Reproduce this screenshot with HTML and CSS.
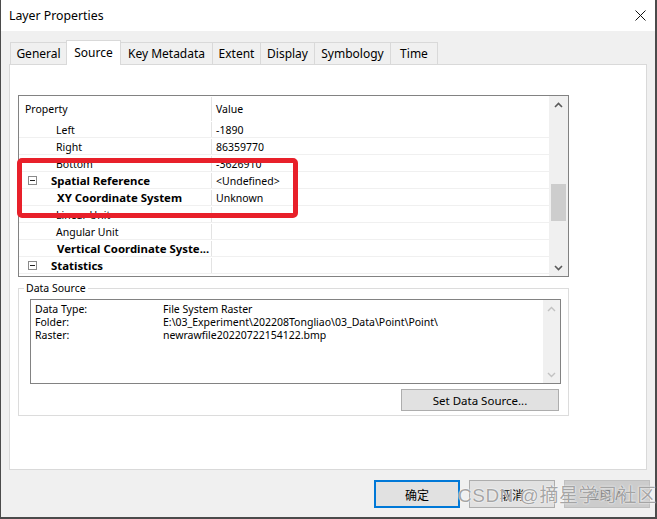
FILE: index.html
```html
<!DOCTYPE html>
<html>
<head>
<meta charset="utf-8">
<title>Layer Properties</title>
<link rel="stylesheet" href="styles.css">
</head>
<body>
<div class="window">
  <div class="titlebar">
    <span class="title">Layer Properties</span>
    <svg class="close" width="11" height="11" viewBox="0 0 11 11"><path d="M0.5 0.5L10.5 10.5M10.5 0.5L0.5 10.5" stroke="#111" stroke-width="1" fill="none"/></svg>
  </div>
  <div class="client">
    <div class="tabs">
      <div class="tab t-general">General</div>
      <div class="tab active t-source">Source</div>
      <div class="tab t-key">Key Metadata</div>
      <div class="tab t-extent">Extent</div>
      <div class="tab t-display">Display</div>
      <div class="tab t-symb">Symbology</div>
      <div class="tab t-time">Time</div>
    </div>
    <div class="panel">
      <div class="grid">
        <div class="grid-main">
          <div class="grid-head"><div class="c1 hcell">Property</div><div class="c2 hcell">Value</div></div>
          <div class="grow"><div class="c1 sub">Left</div><div class="c2">-1890</div></div>
          <div class="grow"><div class="c1 sub">Right</div><div class="c2">86359770</div></div>
          <div class="grow"><div class="c1 sub">Bottom</div><div class="c2">-3626910</div></div>
          <div class="grow"><div class="c1 grp"><span class="minus"></span><b>Spatial Reference</b></div><div class="c2">&lt;Undefined&gt;</div></div>
          <div class="grow"><div class="c1 subb"><b>XY Coordinate System</b></div><div class="c2">Unknown</div></div>
          <div class="grow"><div class="c1 sub">Linear Unit</div><div class="c2"></div></div>
          <div class="grow"><div class="c1 sub">Angular Unit</div><div class="c2"></div></div>
          <div class="grow"><div class="c1 subb"><b>Vertical Coordinate Syste...</b></div><div class="c2"></div></div>
          <div class="grow"><div class="c1 grp"><span class="minus"></span><b>Statistics</b></div><div class="c2"></div></div>
        </div>
        <div class="vscroll">
          <div class="arrow"><svg width="9" height="6" viewBox="0 0 9 6"><path d="M1 5L4.5 1.5L8 5" stroke="#5a5a5a" stroke-width="1.6" fill="none"/></svg></div>
          <div class="thumb"></div>
          <div class="spacer"></div>
          <div class="arrow"><svg width="9" height="6" viewBox="0 0 9 6"><path d="M1 1L4.5 4.5L8 1" stroke="#5a5a5a" stroke-width="1.6" fill="none"/></svg></div>
        </div>
        <div class="redbox"></div>
      </div>
      <fieldset class="group">
        <legend>Data Source</legend>
        <div class="textbox">
          <div class="tb-content">
            <div class="tb-row"><span class="tb-label">Data Type:</span><span>File System Raster</span></div>
            <div class="tb-row"><span class="tb-label">Folder:</span><span>E:\03_Experiment\202208Tongliao\03_Data\Point\Point\</span></div>
            <div class="tb-row"><span class="tb-label">Raster:</span><span>newrawfile20220722154122.bmp</span></div>
          </div>
          <div class="tb-scroll">
            <div class="arrow"><svg width="9" height="6" viewBox="0 0 9 6"><path d="M1 5L4.5 1.5L8 5" stroke="#c2c2c2" stroke-width="1.4" fill="none"/></svg></div>
            <div class="arrow"><svg width="9" height="6" viewBox="0 0 9 6"><path d="M1 1L4.5 4.5L8 1" stroke="#c2c2c2" stroke-width="1.4" fill="none"/></svg></div>
          </div>
        </div>
        <div class="set-row"><button class="set-btn">Set Data Source...</button></div>
      </fieldset>
    </div>
    <div class="buttons">
      <button class="btn default">确定</button>
      <button class="btn">取消</button>
      <button class="btn disabled">应用(A)</button>
    </div>
  </div>
  <div class="watermark">CSDN @摘星学习社区</div>
</div>
</body>
</html>
```
FILE: styles.css
```css
html, body {
  margin: 0;
  padding: 0;
}
body {
  background: #4b4b4b;
  width: 657px;
  height: 519px;
  overflow: hidden;
}
.window {
  margin-left: 1px;
  width: 654px;
  height: 517px;
  background: #f0f0f0;
  position: relative;
  display: flex;
  flex-direction: column;
  font-family: "Noto Sans", "Noto Sans CJK SC", sans-serif;
  color: #000;
}
.titlebar {
  height: 31px;
  flex: none;
  box-sizing: border-box;
  background: #fff;
  display: flex;
  align-items: center;
  justify-content: space-between;
  padding: 1px 9px 0 8px;
}
.title {
  font-size: 12.3px;
  line-height: 16px;
}
.close {
  display: block;
  margin-top: -1px;
}
.client {
  flex: 1;
  display: flex;
  flex-direction: column;
}
.tabs {
  display: flex;
  align-items: flex-end;
  height: 24px;
  margin: 9px 0 0 9px;
}
.tab {
  height: 22px;
  box-sizing: border-box;
  border: 1px solid #d9d9d9;
  border-bottom: none;
  background: #f0f0f0;
  margin-left: -1px;
  padding-top: 1px;
  font-size: 12px;
  line-height: 20px;
  text-align: center;
  white-space: nowrap;
}
.tab.active {
  height: 25px;
  margin-bottom: -1px;
  background: #fff;
  position: relative;
  z-index: 1;
  line-height: 21px;
}
.t-general { width: 57px; margin-left: 0; }
.t-source { width: 55px; }
.t-key { width: 93px; }
.t-extent { width: 49px; }
.t-display { width: 55px; }
.t-symb { width: 77px; }
.t-time { width: 48px; }
.panel {
  margin: 0 8px;
  height: 406px;
  box-sizing: border-box;
  border: 1px solid #d9d9d9;
  background: #fff;
  padding: 30px 0 0 8px;
}
.grid {
  width: 551px;
  height: 182px;
  box-sizing: border-box;
  border: 1px solid #828282;
  display: flex;
  position: relative;
  font-size: 10.5px;
}
.grid b {
  font-size: 11.4px;
}
.grid-main {
  flex: 1;
}
.grid-head {
  display: flex;
  height: 25px;
  box-sizing: border-box;
  padding-top: 1px;
  line-height: 25px;
}
.grow {
  display: flex;
  height: 17px;
  box-sizing: border-box;
  border-bottom: 1px solid #f0f0f0;
  padding-top: 1px;
  line-height: 16px;
  white-space: nowrap;
}
.c1 {
  width: 193px;
  flex: none;
  box-sizing: border-box;
  border-right: 1px solid #e3e3e3;
  overflow: hidden;
}
.c2 {
  flex: 1;
  padding-left: 4px;
}
.hcell.c1 {
  padding-left: 6px;
}
.sub {
  padding-left: 37px;
}
.subb {
  padding-left: 38px;
}
.grp {
  display: flex;
  align-items: center;
  padding-left: 9px;
}
.minus {
  width: 9px;
  height: 9px;
  box-sizing: border-box;
  border: 1px solid #8a8a8a;
  margin-right: 14px;
  position: relative;
  flex: none;
}
.minus::after {
  content: "";
  position: absolute;
  left: 1px;
  top: 3px;
  width: 5px;
  height: 1px;
  background: #222;
}
.vscroll {
  width: 19px;
  flex: none;
  background: #f0f0f0;
  display: flex;
  flex-direction: column;
}
.arrow {
  height: 17px;
  display: flex;
  align-items: center;
  justify-content: center;
  flex: none;
}
.arrow svg {
  display: block;
}
.thumb {
  margin: 71px 2px 0 2px;
  height: 37px;
  background: #cdcdcd;
  flex: none;
}
.spacer {
  flex: 1;
}
.redbox {
  position: absolute;
  left: -2px;
  top: 62px;
  width: 281px;
  height: 60px;
  box-sizing: border-box;
  border: 5px solid #e8202a;
  border-radius: 5px;
}
.group {
  margin: 5px 0 0 0;
  width: 551px;
  box-sizing: border-box;
  border: 1px solid #dcdcdc;
  padding: 4px 0 4px 5px;
  min-width: 0;
}
.group legend {
  padding: 0 2px;
  font-size: 10.5px;
  line-height: 13px;
}
.textbox {
  margin: 0 7px 0 6px;
  height: 85px;
  box-sizing: border-box;
  border: 1px solid #828282;
  display: flex;
}
.tb-content {
  flex: 1;
  padding: 3px 0 0 4px;
  font-size: 10.5px;
  line-height: 13px;
  white-space: nowrap;
}
.tb-row {
  display: flex;
}
.tb-label {
  width: 128px;
  flex: none;
}
.tb-scroll {
  width: 17px;
  flex: none;
  background: #f0f0f0;
  display: flex;
  flex-direction: column;
  justify-content: space-between;
}
.set-row {
  display: flex;
  justify-content: flex-end;
  margin: 5px 9px 0 0;
}
.set-btn {
  width: 158px;
  height: 22px;
  box-sizing: border-box;
  border: 1px solid #adadad;
  background: #e1e1e1;
  font-family: "Noto Sans", sans-serif;
  font-size: 11.5px;
  padding: 0;
  color: #000;
}
.buttons {
  display: flex;
  justify-content: flex-end;
  gap: 9px;
  margin: 10px 5px 0 0;
}
.btn {
  width: 86px;
  height: 28px;
  box-sizing: border-box;
  border: 1px solid #adadad;
  background: #e1e1e1;
  font-family: "Noto Sans CJK SC", "Noto Sans", sans-serif;
  font-size: 12px;
  padding: 0;
  color: #000;
}
.btn.default {
  border: 2px solid #0078d7;
}
.btn.disabled {
  background: #cccccc;
  border-color: #bfbfbf;
  color: #838383;
}
.watermark {
  position: absolute;
  left: 457px;
  top: 485px;
  font-family: "Liberation Sans", "Noto Sans CJK SC", sans-serif;
  font-size: 19px;
  line-height: 22px;
  letter-spacing: 0.5px;
  color: rgba(125, 125, 125, 0.7);
  text-shadow: 0 0 1px #fff, 0 0 2px #fff;
  white-space: nowrap;
  pointer-events: none;
}
```
